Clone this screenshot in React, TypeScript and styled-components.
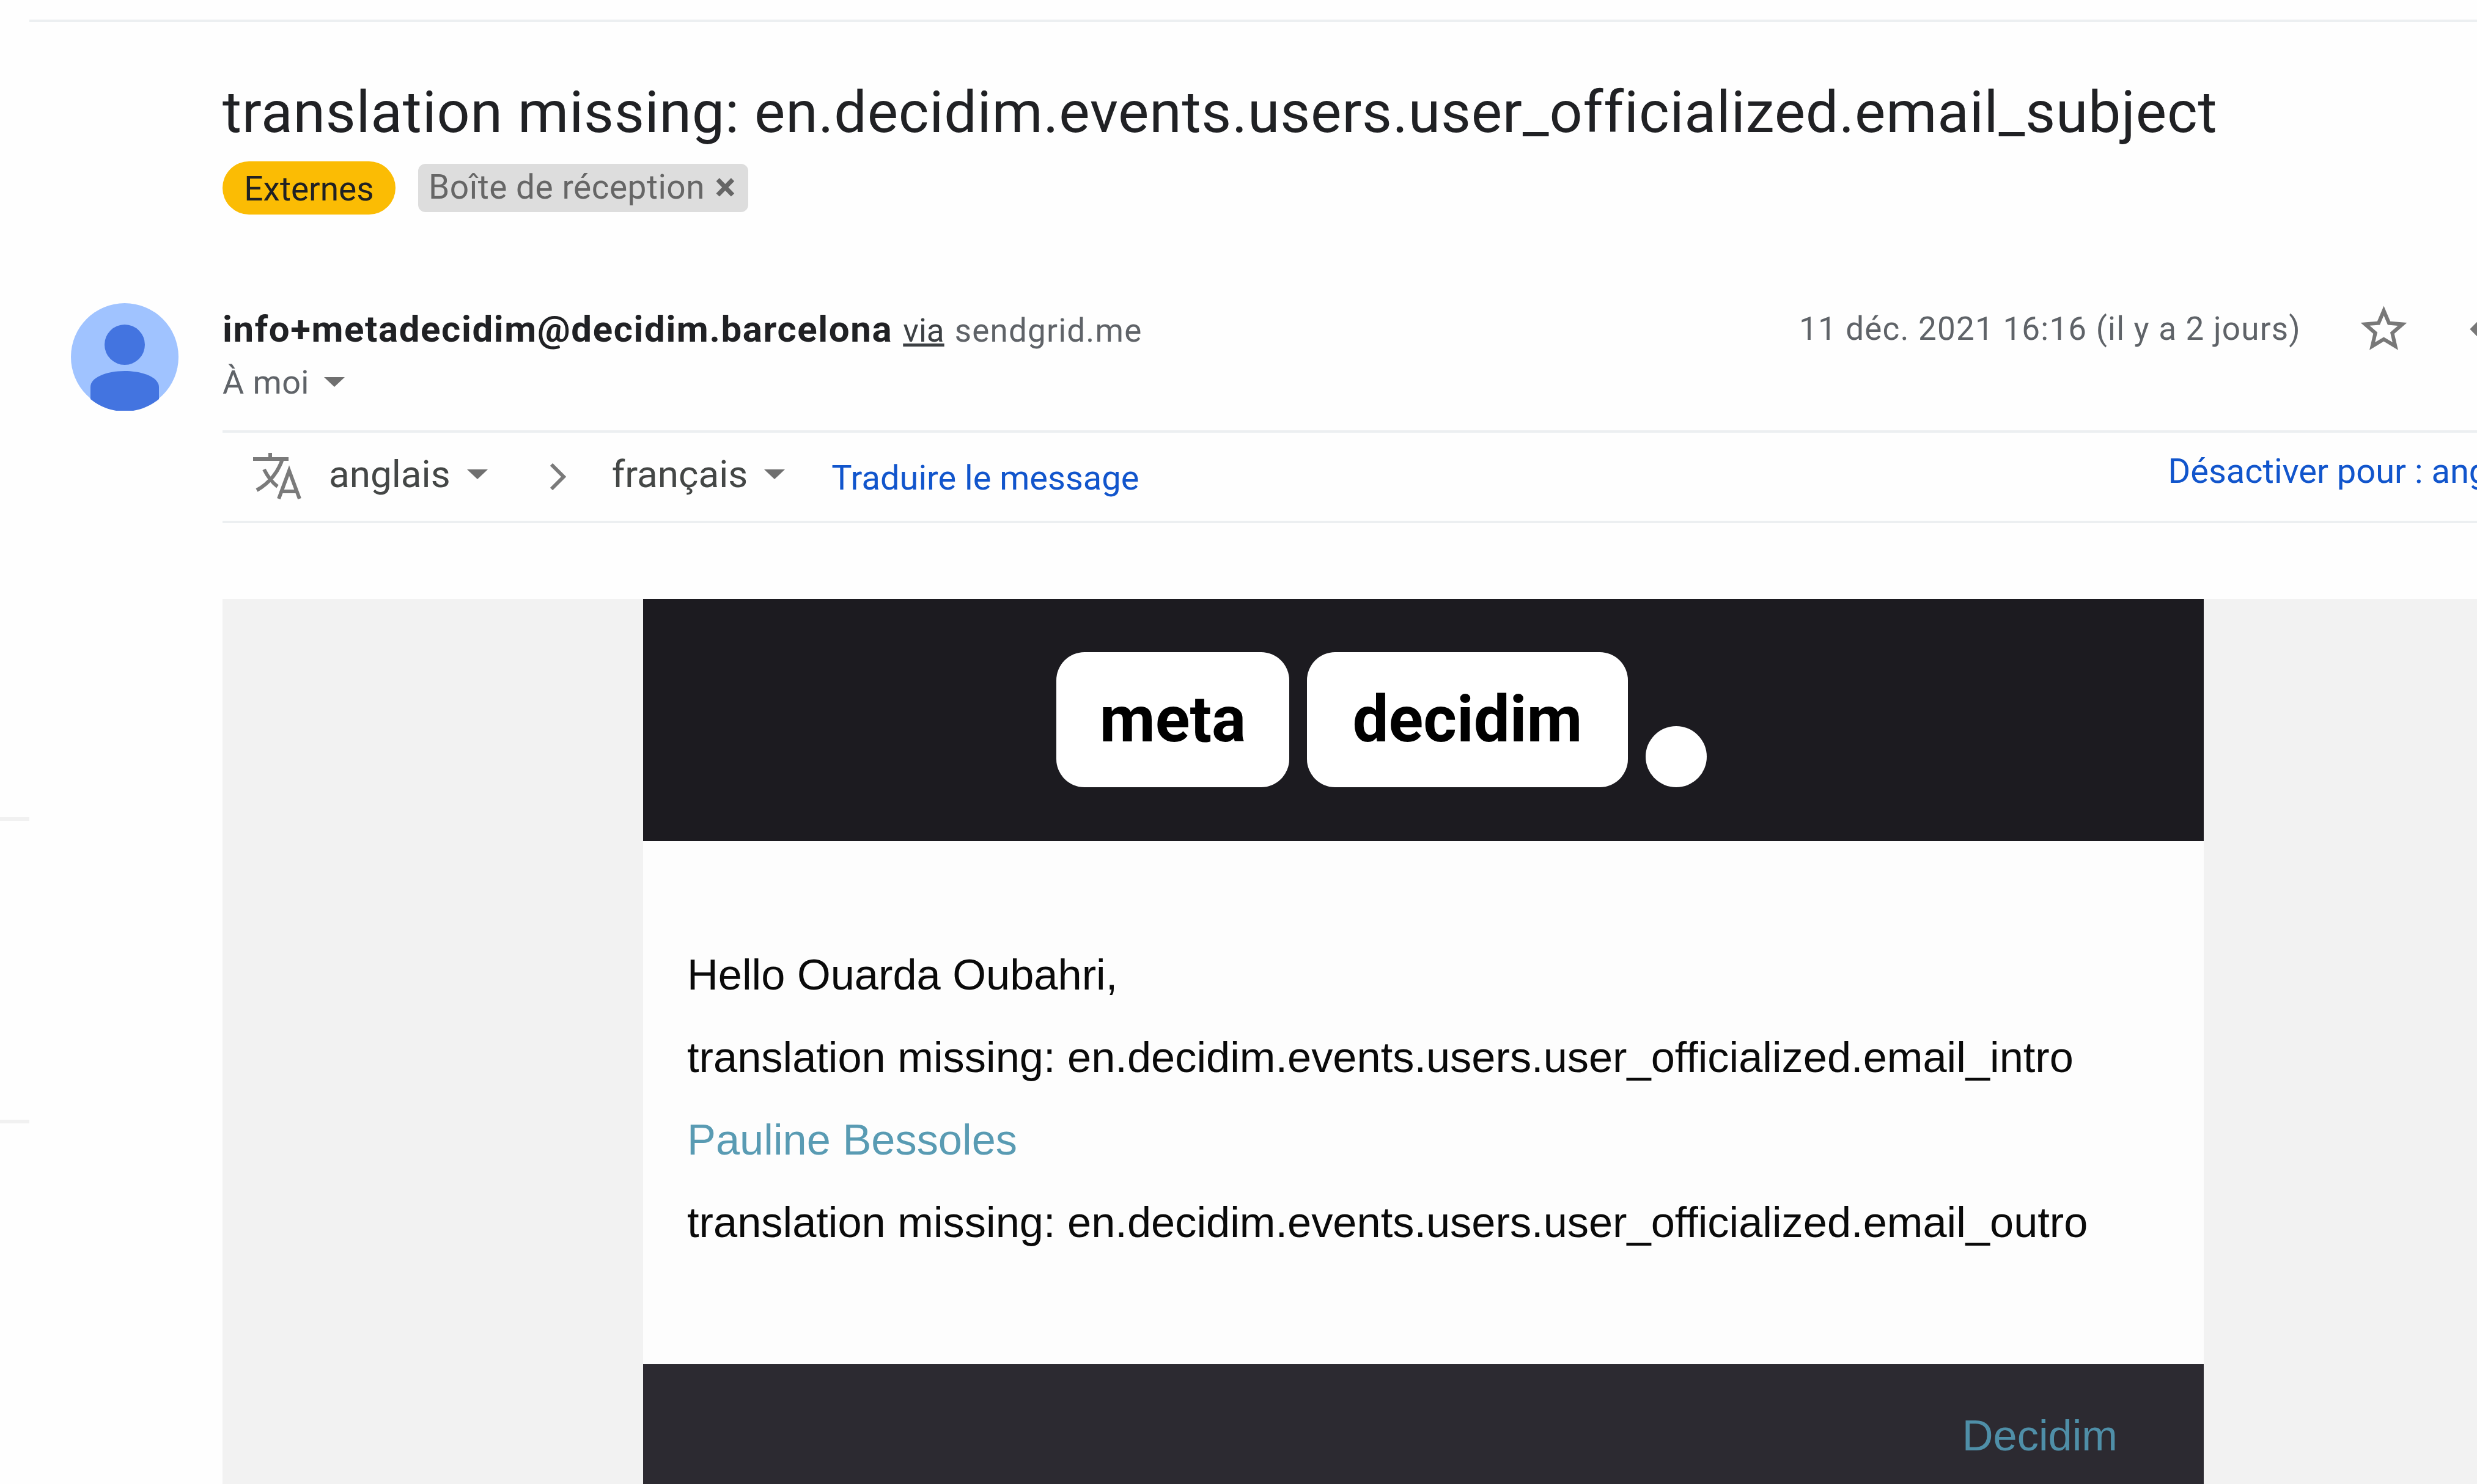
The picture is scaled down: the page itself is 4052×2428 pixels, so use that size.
import * as React from 'react'
import styled, { createGlobalStyle } from 'styled-components'

const GlobalStyle = createGlobalStyle`
  html, body {
    margin: 0;
    padding: 0;
    background: #fefefe;
  }
`

const StarIcon = () => (
  <IconSvg viewBox="0 0 24 24" width="91" height="91">
    <path
      fill="#787878"
      d="M22 9.24l-7.19-.62L12 2 9.19 8.63 2 9.24l5.46 4.73L5.82 21 12 17.27 18.18 21l-1.63-7.03L22 9.24zM12 15.4l-3.76 2.27 1-4.28-3.32-2.88 4.38-.38L12 6.1l1.71 4.04 4.38.38-3.32 2.88 1 4.28L12 15.4z"
    />
  </IconSvg>
)

const ReplyIcon = () => (
  <IconSvg viewBox="0 0 24 24" width="91" height="91">
    <path fill="#787878" d="M10 9V5l-7 7 7 7v-4.1c5 0 8.5 1.6 11 5.1-1-5-4-10-11-11z" />
  </IconSvg>
)

const TranslateIcon = () => (
  <IconSvg viewBox="0 0 84 80" width="84" height="80">
    <g fill="none" stroke="#7a7a7a" strokeWidth="6">
      <path d="M2 11h58M30 1v10M50 11C44 30 30 50 8 62M20 28c6 12 14 22 22 28" />
      <path d="M44 76L61 30L78 76M49 64h24" />
    </g>
  </IconSvg>
)

const Caret = () => (
  <IconSvg viewBox="0 0 34 16" width="34" height="16">
    <path fill="#6f6f6f" d="M0 0h34L17 16z" />
  </IconSvg>
)

const Chevron = () => (
  <ChevronSvg viewBox="0 0 28 44" width="28" height="44">
    <path fill="none" stroke="#7a7a7a" strokeWidth="6" d="M4 2l20 20L4 42" />
  </ChevronSvg>
)

const Avatar = () => (
  <AvatarSvg viewBox="0 0 176 176" width="176" height="176">
    <circle cx="88" cy="88" r="88" fill="#a0c3ff" />
    <circle cx="88" cy="68" r="33" fill="#4374e0" />
    <path
      fill="#4374e0"
      d="M32 157v-20c0-15 25-26 56-26s56 11 56 26v20a88 88 0 0 1-112 0z"
    />
  </AvatarSvg>
)

export default function App() {
  return (
    <Page>
      <GlobalStyle />
      <Rail>
        <RailRow />
      </Rail>
      <Main>
        <Subject>translation missing: en.decidim.events.users.user_officialized.email_subject</Subject>
        <Chips>
          <ExternalChip>Externes</ExternalChip>
          <LabelChip>
            Boîte de réception <ChipClose>×</ChipClose>
          </LabelChip>
        </Chips>
        <SenderBlock>
          <Avatar />
          <SenderBody>
            <SenderLine>
              <SenderInfo>
                <SenderName>info+metadecidim@decidim.barcelona</SenderName>
                <Via>via</Via>
                <Mailer>sendgrid.me</Mailer>
              </SenderInfo>
              <MessageMeta>
                <DateText>11 déc. 2021 16:16 (il y a 2 jours)</DateText>
                <StarButton>
                  <StarIcon />
                </StarButton>
                <ReplyIcon />
              </MessageMeta>
            </SenderLine>
            <Recipient>
              À moi
              <Caret />
            </Recipient>
          </SenderBody>
        </SenderBlock>
        <TranslateBar>
          <TranslateIcon />
          <Language>
            anglais
            <Caret />
          </Language>
          <Chevron />
          <Language>
            français
            <Caret />
          </Language>
          <TranslateLink>Traduire le message</TranslateLink>
          <DisableLink>Désactiver pour : anglais</DisableLink>
        </TranslateBar>
        <MailBackdrop>
          <Mail>
            <MailHeader>
              <LogoBox $width={381}>meta</LogoBox>
              <LogoBox $width={525}>decidim</LogoBox>
              <LogoDot />
            </MailHeader>
            <MailBody>
              <Paragraph>Hello Ouarda Oubahri,</Paragraph>
              <Paragraph>translation missing: en.decidim.events.users.user_officialized.email_intro</Paragraph>
              <MailLink>Pauline Bessoles</MailLink>
              <Paragraph>translation missing: en.decidim.events.users.user_officialized.email_outro</Paragraph>
            </MailBody>
            <MailFooter>
              <FooterLink>Decidim</FooterLink>
            </MailFooter>
          </Mail>
        </MailBackdrop>
      </Main>
    </Page>
  )
}

const Page = styled.div`
  display: flex;
  width: 4052px;
  height: 2428px;
  overflow: hidden;
  background: #fefefe;
  font-family: Roboto, sans-serif;
`

const Rail = styled.div`
  flex: 0 0 48px;
  padding-top: 1337px;
`

const RailRow = styled.div`
  height: 489px;
  border-top: 6px solid #f1f1f1;
  border-bottom: 6px solid #f1f1f1;
`

const Main = styled.div`
  flex: 1;
  min-width: 0;
  margin-top: 32px;
  border-top: 4px solid #eceff1;
`

const Subject = styled.h1`
  margin: 88px 0 0 316px;
  font-size: 95px;
  line-height: 120px;
  font-weight: 400;
  letter-spacing: 0.78px;
  color: #202124;
  white-space: nowrap;
`

const Chips = styled.div`
  display: flex;
  align-items: center;
  gap: 37px;
  margin: 20px 0 0 316px;
`

const ExternalChip = styled.span`
  display: flex;
  align-items: center;
  justify-content: center;
  width: 283px;
  height: 87px;
  padding-top: 3px;
  box-sizing: border-box;
  border-radius: 44px;
  background: #fbbc04;
  color: #202124;
  font-size: 55px;
`

const LabelChip = styled.span`
  display: flex;
  align-items: center;
  justify-content: space-between;
  box-sizing: border-box;
  width: 540px;
  height: 79px;
  padding: 0 20px 3px 17px;
  border-radius: 12px;
  background: #dddddd;
  color: #666666;
  font-size: 55px;
  letter-spacing: 0.5px;
  white-space: nowrap;
`

const ChipClose = styled.b`
  font-size: 64px;
  color: #666666;
`

const SenderBlock = styled.div`
  display: flex;
  gap: 72px;
  margin: 145px 0 0 68px;
`

const AvatarSvg = styled.svg`
  flex: none;
`

const IconSvg = styled.svg`
  flex: none;
  display: block;
`

const ChevronSvg = styled(IconSvg)`
  margin-right: 33px;
`

const SenderBody = styled.div`
  flex: none;
  width: 3756px;
  padding-top: 8px;
`

const SenderLine = styled.div`
  display: flex;
  align-items: center;
  justify-content: space-between;
  height: 68px;
`

const SenderInfo = styled.div`
  display: flex;
  align-items: baseline;
  gap: 17px;
  white-space: nowrap;
`

const SenderName = styled.span`
  font-size: 60px;
  font-weight: 700;
  letter-spacing: 1.6px;
  color: #202124;
`

const Via = styled.span`
  font-size: 53px;
  color: #3c4043;
  text-decoration: underline;
`

const Mailer = styled.span`
  font-size: 53px;
  letter-spacing: 1.2px;
  color: #5f6368;
`

const MessageMeta = styled.div`
  display: flex;
  align-items: center;
`

const DateText = styled.span`
  font-size: 53px;
  letter-spacing: 1.2px;
  color: #5f6368;
  white-space: nowrap;
`

const StarButton = styled.span`
  display: block;
  margin: 0 84px 0 90px;
`

const Recipient = styled.div`
  display: flex;
  align-items: center;
  gap: 24px;
  margin-top: 19px;
  height: 68px;
  font-size: 54px;
  letter-spacing: 0.4px;
  color: #5f6368;
`

const TranslateBar = styled.div`
  display: flex;
  align-items: center;
  width: 4000px;
  height: 152px;
  margin: 32px 0 0 316px;
  padding-left: 48px;
  box-sizing: border-box;
  border-top: 4px solid #eceff1;
  border-bottom: 4px solid #eceff1;
  white-space: nowrap;
`

const Language = styled.span`
  display: flex;
  align-items: center;
  gap: 27px;
  margin: 0 100px 0 42px;
  padding-bottom: 9px;
  font-size: 62px;
  color: #444746;
`

const TranslateLink = styled.span`
  margin: 3px 0 0 -24px;
  font-size: 56px;
  color: #1155cc;
`

const DisableLink = styled.span`
  position: relative;
  top: -11px;
  margin: 3px 0 0 1683px;
  font-size: 56px;
  color: #1155cc;
`

const MailBackdrop = styled.div`
  height: 1448px;
  margin: 124px 0 0 316px;
  padding-left: 688px;
  background: #f2f2f2;
`

const Mail = styled.div`
  display: flex;
  flex-direction: column;
  width: 2553px;
  height: 100%;
  font-family: 'Liberation Sans', Arial, sans-serif;
`

const MailHeader = styled.div`
  display: flex;
  align-items: flex-end;
  gap: 29px;
  box-sizing: border-box;
  height: 396px;
  padding: 87px 0 88px 676px;
  background: #1c1b20;
  font-family: Roboto, sans-serif;
`

const LogoBox = styled.div<{ $width: number }>`
  display: flex;
  align-items: center;
  justify-content: center;
  box-sizing: border-box;
  width: ${props => props.$width}px;
  height: 221px;
  border-radius: 46px;
  background: #ffffff;
  color: #000000;
  font-size: 105px;
  font-weight: 700;
`

const LogoDot = styled.div`
  width: 100px;
  height: 100px;
  border-radius: 50%;
  background: #ffffff;
`

const MailBody = styled.div`
  box-sizing: border-box;
  height: 856px;
  padding: 151px 72px 0;
  background: #fdfdfd;
  font-size: 70.4px;
  line-height: 135px;
`

const Paragraph = styled.div`
  color: #0a0a0a;
  white-space: nowrap;
`

const MailLink = styled.div`
  color: #599bb3;
`

const MailFooter = styled.div`
  flex: 1;
  display: flex;
  justify-content: flex-end;
  padding: 72px 141px 0 0;
  background: #2c2a31;
`

const FooterLink = styled.span`
  font-size: 70.4px;
  line-height: 90px;
  color: #4f8fa8;
`
